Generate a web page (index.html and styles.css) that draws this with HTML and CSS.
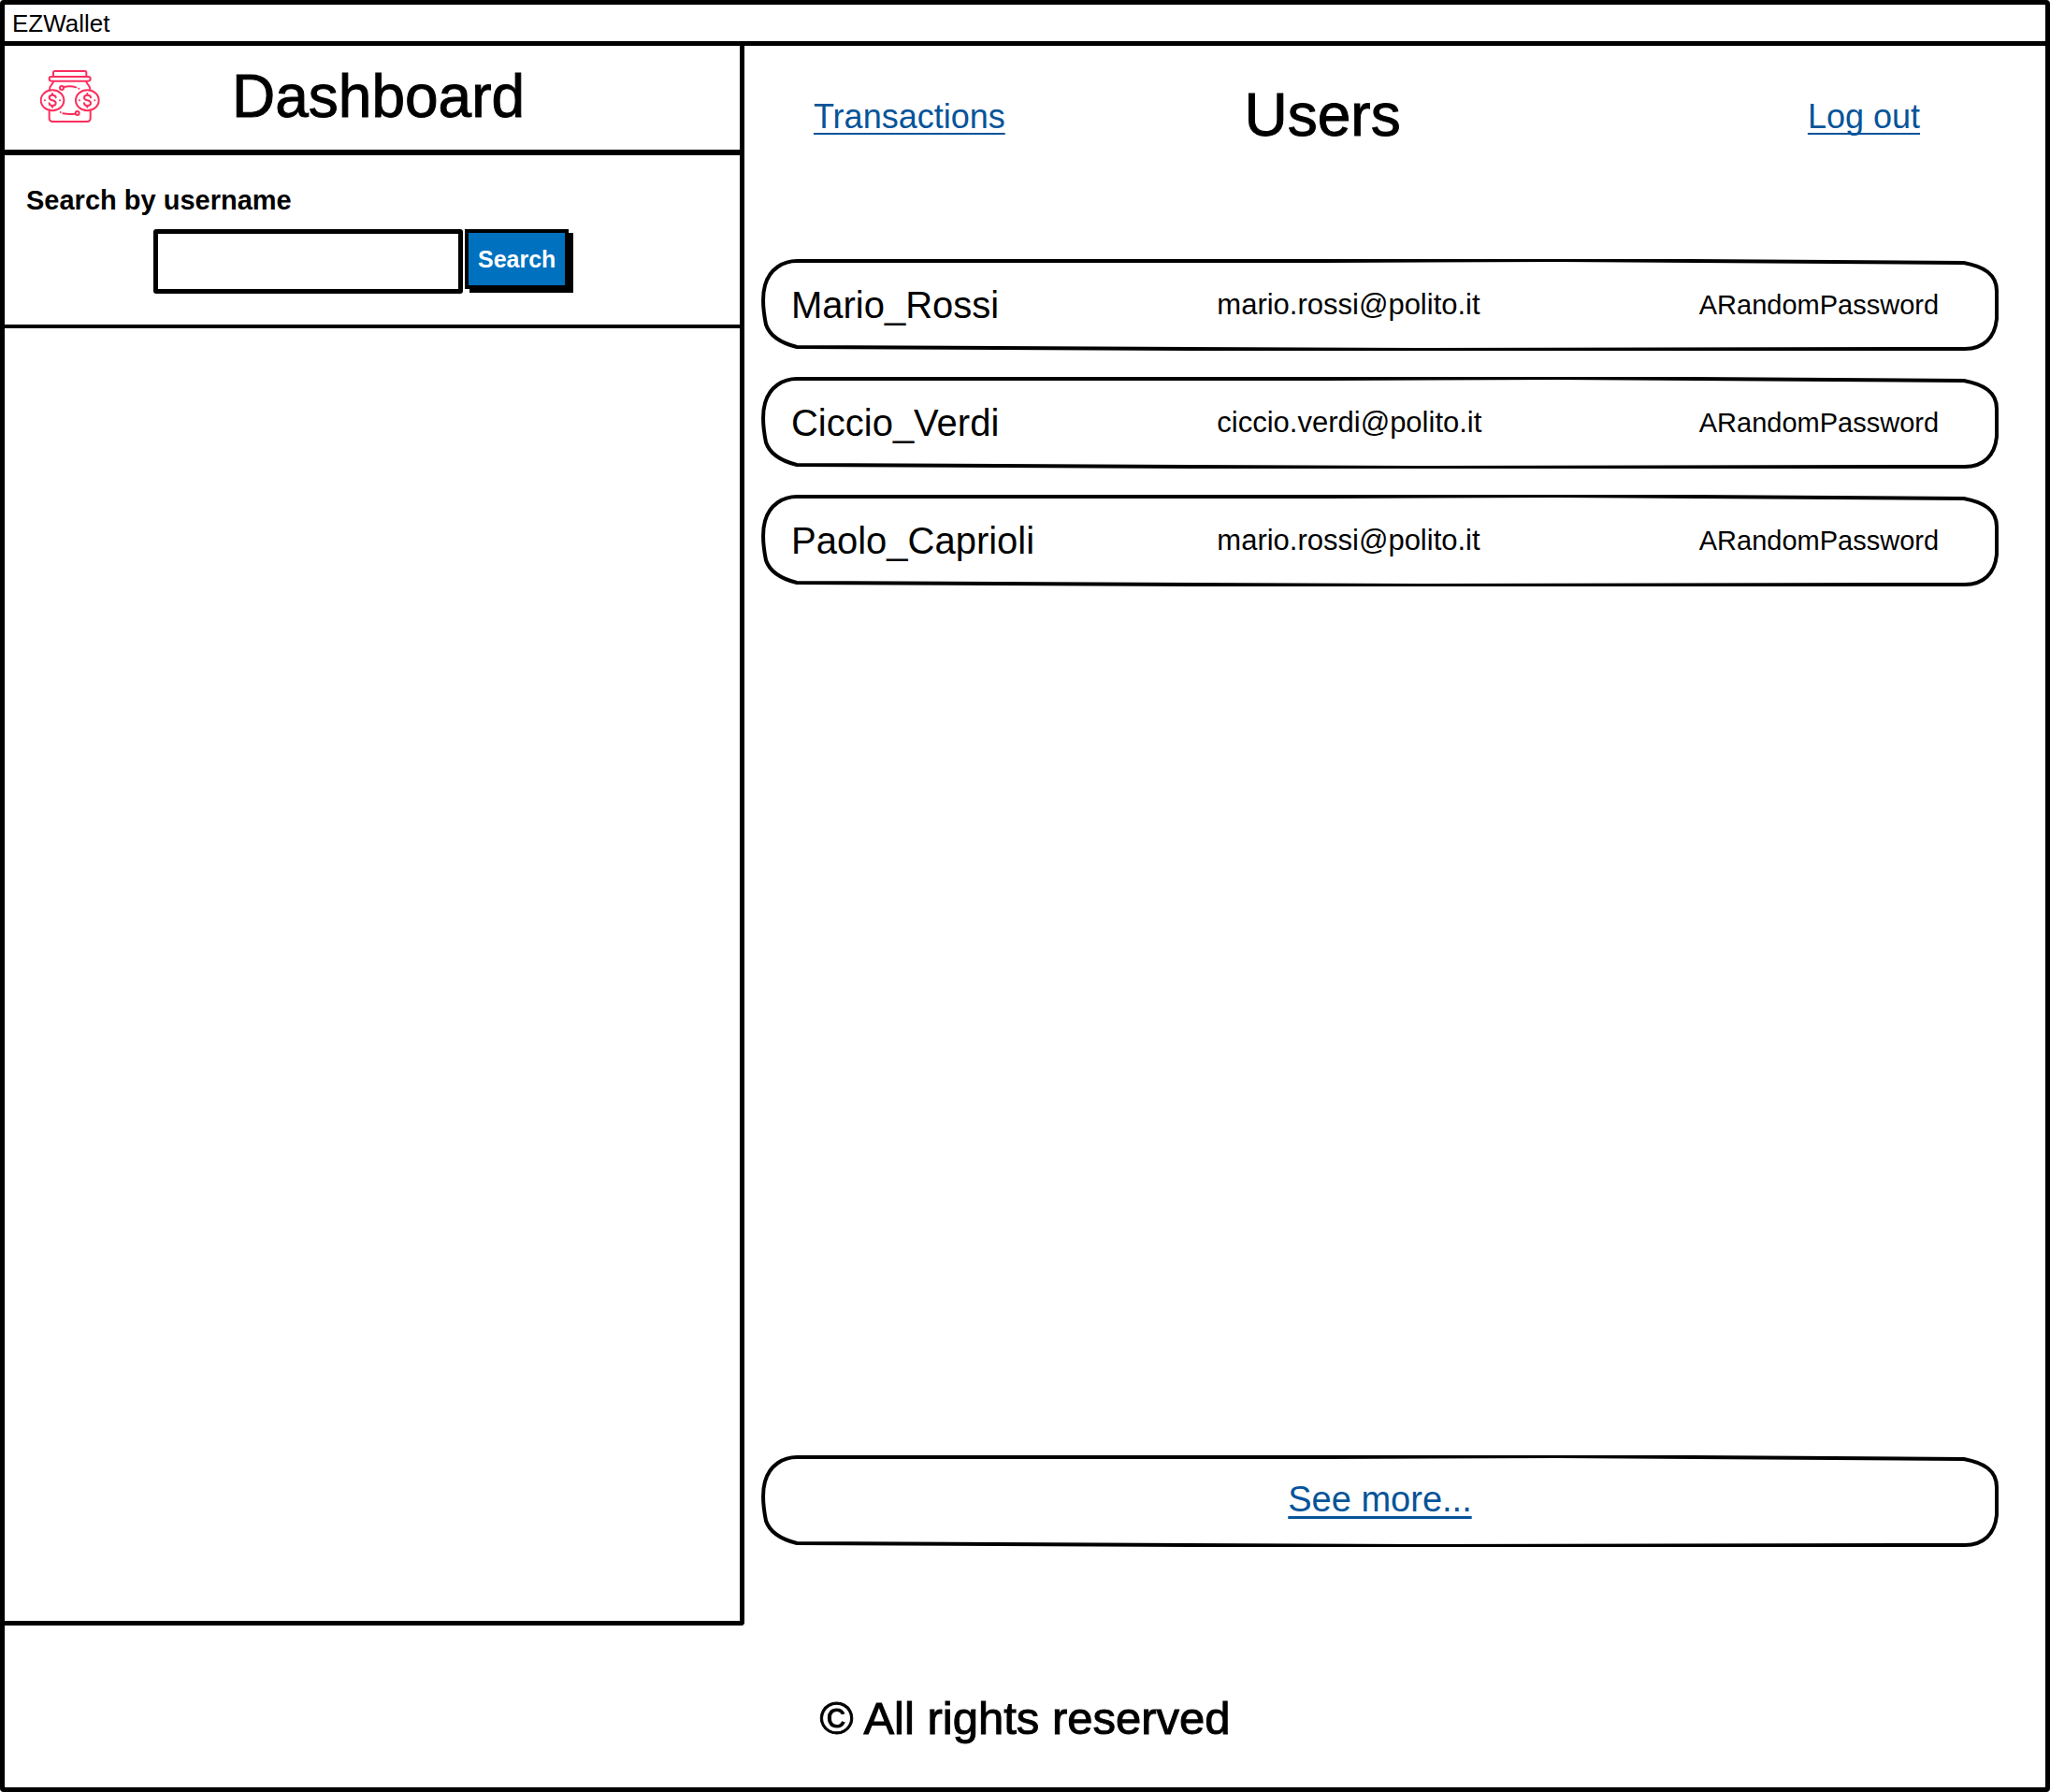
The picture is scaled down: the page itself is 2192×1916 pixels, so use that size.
FILE: index.html
```html
<!DOCTYPE html>
<html lang="en">
<head>
  <meta charset="utf-8">
  <meta name="viewport" content="width=device-width, initial-scale=1">
  <title>EZWallet</title>
  <link rel="stylesheet" href="styles.css">
</head>
<body>
  <div class="window">
    <div class="title-bar">EZWallet</div>

    <div class="layout">
      <aside class="sidebar">
        <header class="brand">
          <svg class="brand-logo" viewBox="38 45 192 168" aria-hidden="true">
            <g fill="none" stroke="#fb2e5d" stroke-width="6" stroke-linecap="round" stroke-linejoin="round">
              <path d="M80 66V53q0-5 5-5h96q5 0 5 5v13"/>
              <rect x="67" y="66" width="132" height="14" rx="7"/>
              <path d="M80 81q0 6-6 11-6 7-6 17M186 81q0 6 6 11 6 7 6 17"/>
              <path d="M67 177v22q0 11 11 11h110q11 0 11-11v-22"/>
              <ellipse cx="77" cy="142" rx="37" ry="33"/>
              <ellipse cx="189" cy="142" rx="37" ry="33"/>
              <path d="M88 133q0-8-11-8-10 0-10 8 0 7 10 9 11 2 11 9 0 8-11 8-10 0-10-8M77 120v5M77 159v5"/>
              <path d="M200 133q0-8-11-8-10 0-10 8 0 7 10 9 11 2 11 9 0 8-11 8-10 0-10-8M189 120v5M189 159v5"/>
              <circle cx="107" cy="102" r="6"/>
              <path d="M114 99q20-5 39 1"/>
              <circle cx="157" cy="183" r="6"/>
              <path d="M150 185q-20 3-39-1"/>
            </g>
            <g fill="#fb2e5d">
              <circle cx="53" cy="142" r="3"/>
              <circle cx="101" cy="142" r="3"/>
              <circle cx="164" cy="142" r="3"/>
              <circle cx="213" cy="142" r="3"/>
              <circle cx="162" cy="104" r="3"/>
              <circle cx="103" cy="180" r="3"/>
            </g>
          </svg>
          <h2 class="heading">Dashboard</h2>
        </header>

        <form class="search">
          <label class="search-label" for="username">Search by username</label>
          <div class="search-row">
            <input class="search-input" id="username" name="username" type="text">
            <button class="search-button" type="button">Search</button>
          </div>
        </form>
      </aside>

      <main class="content">
        <header class="content-header">
          <a class="link" href="#transactions">Transactions</a>
          <h1 class="heading">Users</h1>
          <a class="link" href="#logout">Log out</a>
        </header>

        <table class="users" aria-label="Users">
          <tbody class="users-body">
            <tr class="card user">
              <td class="user-name">Mario_Rossi</td>
              <td class="user-email">mario.rossi@polito.it</td>
              <td class="user-password">ARandomPassword</td>
            </tr>
            <tr class="card user">
              <td class="user-name">Ciccio_Verdi</td>
              <td class="user-email">ciccio.verdi@polito.it</td>
              <td class="user-password">ARandomPassword</td>
            </tr>
            <tr class="card user">
              <td class="user-name">Paolo_Caprioli</td>
              <td class="user-email">mario.rossi@polito.it</td>
              <td class="user-password">ARandomPassword</td>
            </tr>
          </tbody>
        </table>

        <div class="card more">
          <a class="link link-large" href="#more">See more...</a>
        </div>
      </main>
    </div>

    <footer class="footer">© All rights reserved</footer>
  </div>
</body>
</html>
```
FILE: styles.css
```css
* {
  box-sizing: border-box;
}

body {
  margin: 0;
  background: #fff;
  color: #000;
  font-family: "Liberation Sans", Arial, sans-serif;
}

.window {
  display: flex;
  flex-direction: column;
  min-height: 100vh;
  border: 5px solid #000;
  border-radius: 4px;
}

.title-bar {
  padding: 5px 8px 4px;
  border-bottom: 5px solid #000;
  font-size: 26px;
  line-height: 30px;
}

.layout {
  flex: 1;
  display: grid;
  grid-template-columns: minmax(0, 29fr) minmax(0, 51fr);
}

.heading {
  margin: 0;
  font-size: 64px;
  font-weight: 400;
  line-height: 64px;
  -webkit-text-stroke: 1px currentColor;
}

/* Sidebar */

.sidebar {
  border-right: 5px solid #000;
  border-bottom: 5px solid #000;
  border-bottom-right-radius: 4px;
}

.brand {
  display: flex;
  align-items: center;
  gap: 141px;
  padding: 22px 38px 25px;
  border-bottom: 6px solid #000;
}

.brand-logo {
  width: 64px;
  height: 56px;
}

.search {
  padding: 32px 23px 33px;
  border-bottom: 4px solid #000;
}

.search-label {
  display: block;
  margin-bottom: 15px;
  font-size: 29px;
  font-weight: 700;
  line-height: 32px;
}

.search-row {
  display: flex;
  align-items: flex-start;
  gap: 2px;
  padding-left: 136px;
}

.search-input {
  width: 331px;
  height: 69px;
  padding: 0 12px;
  border: 5px solid #000;
  border-radius: 3px;
  background: #fff;
  font: inherit;
  font-size: 29px;
}

.search-button {
  height: 64px;
  padding: 0 10px;
  border: 4px solid #000;
  background: #0071bf;
  box-shadow: 5px 4px 0 #000;
  color: #fff;
  font: inherit;
  font-size: 25px;
  font-weight: 700;
}

/* Content */

.content {
  display: flex;
  flex-direction: column;
  padding: 42px 50px 84px 18px;
}

.content-header {
  display: grid;
  grid-template-columns: 39fr 51fr auto;
  align-items: center;
  margin-bottom: 122px;
  padding: 0 84px 0 56px;
}

.link {
  justify-self: start;
  color: #065499;
  font-size: 36px;
  line-height: 40px;
  text-decoration: underline;
  text-decoration-skip-ink: none;
  text-decoration-thickness: 2px;
  text-underline-offset: 5px;
}

.content-header .link {
  padding-top: 4px;
}

.link-large {
  font-size: 38px;
  text-decoration-thickness: 3px;
}

.users {
  display: block;
}

.users-body {
  display: flex;
  flex-direction: column;
  gap: 28px;
}

/* Hand-drawn rounded outline, stretched to the card */
.card {
  min-height: 98px;
  background: url("data:image/svg+xml,%3Csvg xmlns='http://www.w3.org/2000/svg' viewBox='0 0 1322 98' preserveAspectRatio='none'%3E%3Cpath d='M38 2L600 2 850 1 1285 4C1306 8 1320 16 1320 34V64C1318 84 1306 96 1286 96L700 97 38 94C22 90 9 82 5 70 1 50 2 35 4 28 9 10 24 2 38 2Z' fill='none' stroke='%23000' stroke-width='4' vector-effect='non-scaling-stroke'/%3E%3C/svg%3E") center / 100% 100% no-repeat;
}

.user {
  display: grid;
  grid-template-columns: 91fr 103fr 52fr;
  align-items: center;
  padding: 0 60px 0 32px;
}

.user td {
  padding: 0;
}

.user-name {
  font-size: 40px;
}

.user-email {
  font-size: 31px;
}

.user-password {
  font-size: 29px;
}

.more {
  display: flex;
  align-items: center;
  justify-content: center;
  margin-top: auto;
  padding-bottom: 4px;
}

/* Footer */

.footer {
  padding: 71px 20px 46px;
  font-size: 49px;
  line-height: 56px;
  text-align: center;
  -webkit-text-stroke: 1px currentColor;
}
```
